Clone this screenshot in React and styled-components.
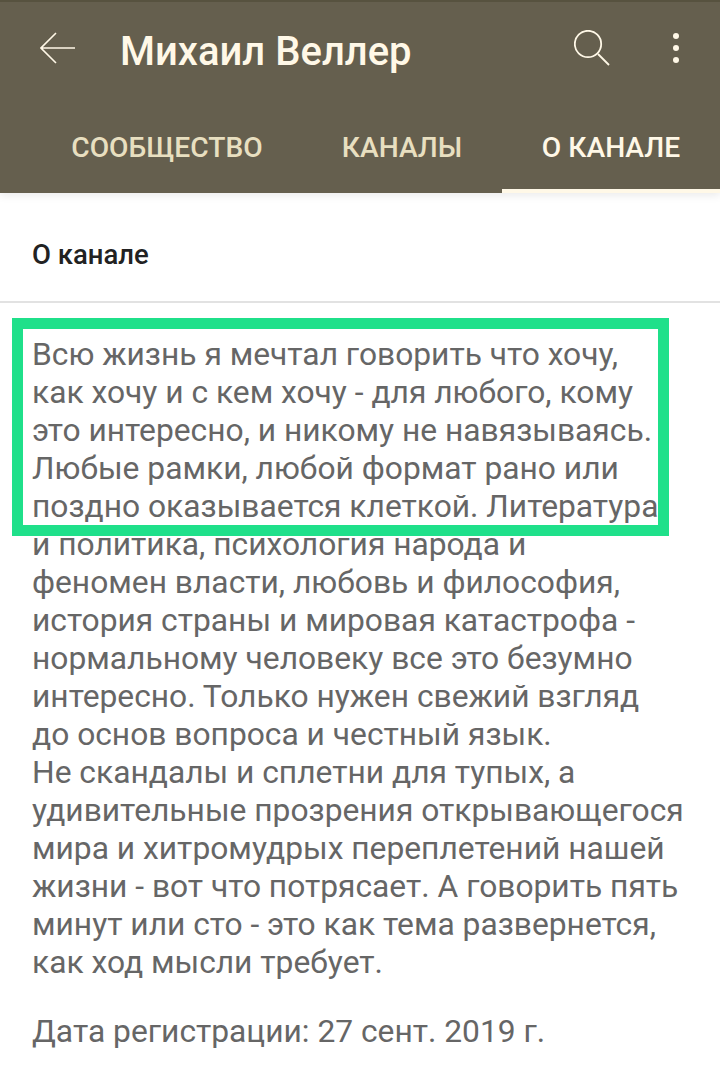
import React from 'react'
import styled, { createGlobalStyle } from 'styled-components'

const GlobalStyle = createGlobalStyle`
  html, body { margin: 0; padding: 0; background: #fff; }
  body { font-family: Roboto, "Liberation Sans", sans-serif; }
`

const Page = styled.div`
  position: relative;
  width: 720px;
  height: 1080px;
  overflow: hidden;
  background: #fff;
`

const Header = styled.header`
  height: 193px;
  background: #655f4e;
  border-top: 2px solid #57523f;
  box-sizing: border-box;
  display: flex;
  flex-direction: column;
  box-shadow: 0 3px 8px rgba(0, 0, 0, 0.08);
`

const Toolbar = styled.div`
  height: 98px;
  display: flex;
  align-items: center;
  padding: 0 40px;
  color: #fff8e7;
`

const Title = styled.h1`
  margin: 1px 0 0 45px;
  flex: 1;
  font-size: 40px;
  font-weight: 500;
  line-height: 46px;
  color: #fff8e7;
`

const IconButton = styled.button`
  padding: 0;
  border: 0;
  background: none;
  display: flex;
  margin-bottom: 6px;
  margin-left: ${props => props.gap || 0}px;
`

const Tabs = styled.nav`
  flex: 1;
  display: flex;
  align-items: stretch;
  padding-left: 32px;
`

const Tab = styled.div`
  width: ${props => props.width}px;
  box-sizing: border-box;
  display: flex;
  align-items: center;
  justify-content: center;
  padding-top: 5px;
  font-size: 28.2px;
  font-weight: 500;
  color: ${props => props.active ? '#fff8e7' : '#e8dfc0'};
  border-bottom: 4px solid ${props => props.active ? '#fff8e7' : 'transparent'};
`

const SectionTitle = styled.div`
  height: 110px;
  box-sizing: border-box;
  padding: 15px 32px 0;
  display: flex;
  align-items: center;
  border-bottom: 2px solid #e2e2e2;
  font-size: 27.5px;
  font-weight: 500;
  color: #222;
`

const About = styled.div`
  padding: 33px 32px 0;
  font-size: 31.75px;
  line-height: 38px;
  color: #666;
`

const Paragraph = styled.p`
  margin: 0;
  white-space: pre-line;
`

const RegDate = styled.p`
  margin: 31px 0 0;
`

const Highlight = styled.div`
  position: absolute;
  left: 12px;
  top: 318px;
  width: 657px;
  height: 218px;
  box-sizing: border-box;
  border: 11px solid #1fe08a;
`

const text = `Всю жизнь я мечтал говорить что хочу,
как хочу и с кем хочу - для любого, кому
это интересно, и никому не навязываясь.
Любые рамки, любой формат рано или
поздно оказывается клеткой. Литература
и политика, психология народа и
феномен власти, любовь и философия,
история страны и мировая катастрофа -
нормальному человеку все это безумно
интересно. Только нужен свежий взгляд
до основ вопроса и честный язык.
Не скандалы и сплетни для тупых, а
удивительные прозрения открывающегося
мира и хитромудрых переплетений нашей
жизни - вот что потрясает. А говорить пять
минут или сто - это как тема развернется,
как ход мысли требует.`

const App = () => {
  return (
    <Page>
      <GlobalStyle />
      <Header>
        <Toolbar>
          <IconButton>
            <svg width="35" height="32" viewBox="0 0 35 32" fill="none" stroke="#fff8e7" strokeWidth="1.6">
              <path d="M35 16H1M16 1L1 16L16 31" />
            </svg>
          </IconButton>
          <Title>Михаил Веллер</Title>
          <IconButton>
            <svg width="36" height="36" viewBox="0 0 36 36" fill="none" stroke="#fff8e7" strokeWidth="1.8">
              <circle cx="14" cy="14" r="13.2" />
              <path d="M24 24L35 35" />
            </svg>
          </IconButton>
          <IconButton gap="62">
            <svg width="8" height="32" viewBox="0 0 8 32" fill="#fff8e7">
              <circle cx="4" cy="4" r="3" />
              <circle cx="4" cy="16" r="3" />
              <circle cx="4" cy="28" r="3" />
            </svg>
          </IconButton>
        </Toolbar>
        <Tabs>
          <Tab width={270}>СООБЩЕСТВО</Tab>
          <Tab width={200}>КАНАЛЫ</Tab>
          <Tab width={218} active>О КАНАЛЕ</Tab>
        </Tabs>
      </Header>
      <SectionTitle>О канале</SectionTitle>
      <About>
        <Paragraph>{text}</Paragraph>
        <RegDate>Дата регистрации: 27 сент. 2019 г.</RegDate>
      </About>
      <Highlight />
    </Page>
  )
}

export default App
